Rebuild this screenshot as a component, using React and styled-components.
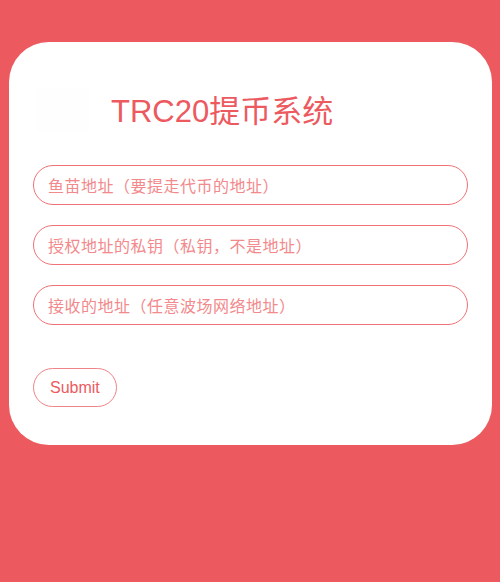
import React from "react";
import styled, { createGlobalStyle } from "styled-components";

const Global = createGlobalStyle`
  html, body { margin: 0; padding: 0; background: #ec5a5f; }
  body { font-family: "Liberation Sans", "Noto Sans CJK SC", sans-serif; min-height: 582px; }
  #root { padding: 42px 8px 0 9px; }
`;

const Card = styled.div`
  background: #ffffff;
  border-radius: 40px;
  padding: 46px 24px 38px 24px;
  box-sizing: border-box;
  height: 403px;
`;

const Header = styled.div`
  display: flex;
  align-items: center;
  height: 44px;
  margin-bottom: 33px;
`;

const Logo = styled.div`
  width: 54px;
  height: 44px;
  margin-left: 3px;
  border-radius: 4px;
  background: #fffefe;
`;

const Title = styled.h1`
  margin: 4px 0 0 21px;
  font-family: "Liberation Sans", "Noto Sans CJK SC", sans-serif;
  font-weight: normal;
  font-size: 31px;
  color: #ec5a5f;
  line-height: 44px;
`;

const Form = styled.form`
  display: flex;
  flex-direction: column;
  gap: 20px;
`;

const Input = styled.input`
  box-sizing: border-box;
  width: 435px;
  height: 40px;
  border: 1px solid #ef7276;
  border-radius: 20px;
  padding: 4px 14px 0;
  font-family: "Liberation Sans", "Noto Sans CJK SC", sans-serif;
  font-size: 16px;
  letter-spacing: 0.5px;
  color: #ec5a5f;
  outline: none;
  background: #fff;
  &::placeholder { color: #f2898c; }
`;

const Button = styled.button`
  align-self: flex-start;
  margin-top: 23px;
  height: 39px;
  padding: 1px 16px 0;
  border: 1px solid #f08387;
  border-radius: 20px;
  background: #fff;
  color: #ec5a5f;
  font-family: "Liberation Sans", sans-serif;
  font-size: 16px;
  cursor: pointer;
`;

export default function App() {
  return (
    <>
      <Global />
      <Card>
        <Header>
          <Logo />
          <Title>TRC20提币系统</Title>
        </Header>
        <Form onSubmit={(e) => e.preventDefault()}>
          <Input placeholder="鱼苗地址（要提走代币的地址）" />
          <Input placeholder="授权地址的私钥（私钥，不是地址）" />
          <Input placeholder="接收的地址（任意波场网络地址）" />
          <Button type="submit">Submit</Button>
        </Form>
      </Card>
    </>
  );
}
